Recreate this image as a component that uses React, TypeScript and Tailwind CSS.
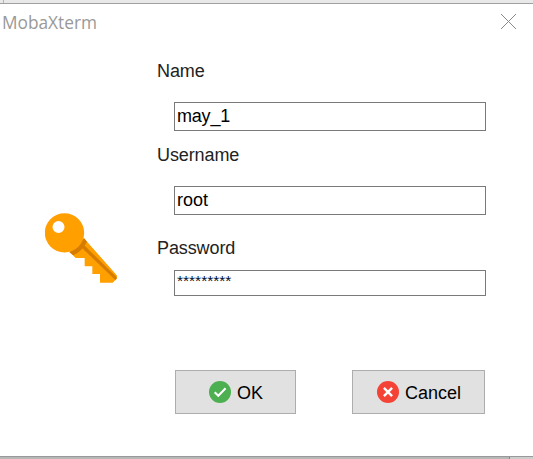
import React from "react";

function KeyIcon() {
  return (
    <svg className="ml-[45px] mt-[208px] block" width="74" height="72" viewBox="30 36 222 216">
      <path fill="#FF9F00" d="M148 116L245 226V236L233 248H195V222H172V199H149V174H122L104 156Z" />
      <path fill="#D57C00" d="M137 140L148 134L245 230V236L241 240Z" />
      <path fill="#FF9F00" d="M150 120L245 227V232L148 136Z" />
      <path fill="#D57C00" d="M147 114L156 125Q141 154 115 166L103 157Z" />
      <path
        fill="#FF9F00"
        fillRule="evenodd"
        d="M88.500 39.500a59 59 0 1 1 0 118a59 59 0 1 1 0-118ZM70.500 63a18 18 0 1 0 0 36a18 18 0 1 0 0-36Z"
      />
    </svg>
  );
}

function OkIcon() {
  return (
    <svg width="22" height="22" viewBox="0 0 22 22">
      <circle cx="11" cy="11" r="11" fill="#4CAF50" />
      <path d="M5.700 11.300L9.300 14.800L16.600 7.300" fill="none" stroke="#fff" strokeWidth="2.100" />
    </svg>
  );
}

function CancelIcon() {
  return (
    <svg width="22" height="22" viewBox="0 0 22 22">
      <circle cx="11" cy="11" r="11" fill="#F44336" />
      <path d="M6.900 6.900L15.100 15.100M15.100 6.900L6.900 15.100" fill="none" stroke="#fff" strokeWidth="2.400" />
    </svg>
  );
}

function Label({ children }: { children: string }) {
  return <div className="h-6 text-[18px] leading-6 tracking-[-0.1px] text-[#222]">{children}</div>;
}

export default function App() {
  return (
    <div className="flex h-[459px] w-[533px] flex-col overflow-hidden bg-white font-['Liberation_Sans',Arial,sans-serif]">
      <div className="flex h-[3px] shrink-0 bg-[#e9e9e9] pl-[3px]">
        <div className="w-px bg-[#b5b5b5]" />
      </div>
      <div className="h-px shrink-0 bg-[#a0a0a0]" />
      <main className="flex h-[452px] shrink-0">
        <div className="flex w-[157px] shrink-0 flex-col">
          <div className="h-0 whitespace-nowrap pl-[2px] font-['Open_Sans',sans-serif] text-[17.300px] font-normal leading-[37px] text-[#999]">
            MobaXterm
          </div>
          <KeyIcon />
        </div>
        <div className="flex w-[329px] shrink-0 flex-col pt-[55px]">
          <Label>Name</Label>
          <div className="ml-[17px] mt-[19px] h-[29px] border border-[#7a7a7a] pl-[2px] text-[18px] leading-[27px] tracking-[-0.2px] text-black">
            may_1
          </div>
          <div className="mt-3">
            <Label>Username</Label>
          </div>
          <div className="ml-[17px] mt-[19px] h-[29px] border border-[#7a7a7a] pl-[2px] text-[18px] leading-[27px] text-black">
            root
          </div>
          <div className="mt-[21px]">
            <Label>Password</Label>
          </div>
          <div className="ml-[17px] mt-[10px] h-[26px] border border-[#7a7a7a] pl-[2px] text-[15.500px] leading-[20px] text-[#001030]">
            *********
          </div>
          <div className="ml-[18px] mr-px mt-[74px] flex justify-between">
            <button className="flex h-11 w-[121px] items-center gap-[6px] border border-[#adadad] bg-[#e1e1e1] pl-[33px] text-[18px] text-black">
              <OkIcon />
              <span className="pt-[2px]">OK</span>
            </button>
            <button className="flex h-11 w-[133px] items-center gap-[6px] border border-[#adadad] bg-[#e1e1e1] pl-[24px] text-[18px] text-black">
              <CancelIcon />
              <span className="pt-[2px]">Cancel</span>
            </button>
          </div>
        </div>
        <div className="pl-[15px] pt-[10px]">
          <svg width="15" height="15" viewBox="0 0 15 15">
            <path d="M0 0L15 15M15 0L0 15" stroke="#888" strokeWidth="1" />
          </svg>
        </div>
      </main>
      <div className="h-px shrink-0 bg-[#999]" />
      <div className="flex h-[2px] shrink-0">
        <div className="w-[509px] bg-[#b7b7b7]" />
        <div className="w-px bg-[#858585]" />
        <div className="flex-1 bg-[#cdcdcd]" />
      </div>
    </div>
  );
}
